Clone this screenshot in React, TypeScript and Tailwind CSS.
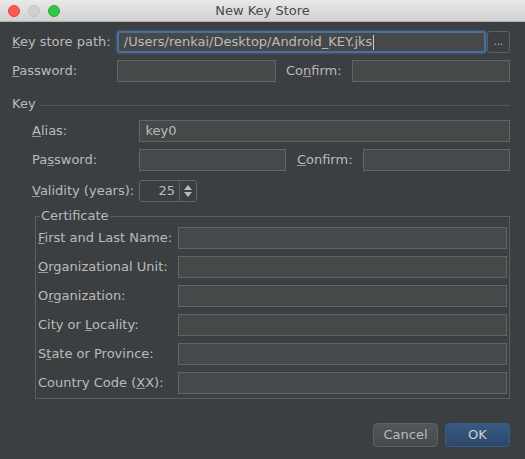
const font = { fontFamily: '"DejaVu Sans", "Noto Sans", sans-serif' };

function U({ children }: { children: string }) {
  return <span className="underline underline-offset-[1px] decoration-[#999]">{children}</span>;
}

function Field({ w, value, focused }: { w: string; value?: string; focused?: boolean }) {
  if (focused) {
    return (
      <div className={`${w} h-[22px] rounded-[3px] border-2 border-[#4d6f95] shadow-[0_0_2px_1px_#3d5a7c] bg-[#45494a] flex items-center px-[5px] text-[13px] text-[#bbbbbb]`}>
        <span>{value}</span>
        <span className="w-px h-[15px] bg-[#cccccc] ml-px" />
      </div>
    );
  }
  return (
    <div className={`${w} h-[22px] border border-[#646464] bg-[#45494a] flex items-center px-[6px] text-[13px] text-[#bbbbbb]`}>
      {value}
    </div>
  );
}

const certRows: [string, string, string][] = [
  ["", "F", "irst and Last Name:"],
  ["", "O", "rganizational Unit:"],
  ["O", "r", "ganization:"],
  ["City or ", "L", "ocality:"],
  ["S", "t", "ate or Province:"],
  ["Country Code (", "X", "X):"],
];

export default function App() {
  return (
    <div className="w-[525px] h-[459px] bg-[#3c3f41] flex flex-col overflow-hidden" style={font}>
      <div className="h-[22px] shrink-0 bg-gradient-to-b from-[#e9e9e9] to-[#d1d1d1] border-b border-[#b4b4b4] flex items-center relative">
        <div className="flex gap-[8px] pl-[8px]">
          <div className="w-[12px] h-[12px] rounded-full bg-[#fc5753] border border-[#df4744]" />
          <div className="w-[12px] h-[12px] rounded-full bg-[#d0d0d0] border border-[#c4c4c4]" />
          <div className="w-[12px] h-[12px] rounded-full bg-[#33c748] border border-[#27aa35]" />
        </div>
        <div className="absolute inset-0 flex items-center justify-center text-[13px] text-[#4a4a4a]">New Key Store</div>
      </div>

      <div className="flex flex-col pl-[12px] pr-[15px] pt-[9px] text-[13px] text-[#bbbbbb]">
        <div className="flex items-center h-[22px]">
          <div className="w-[105px]"><U>K</U>ey store path:</div>
          <Field w="w-[370px]" value="/Users/renkai/Desktop/Android_KEY.jks" focused />
          <div className="ml-[1px] w-[23px] h-[22px] rounded-[3px] border border-[#5e6060] flex items-center justify-center text-[10px] text-[#bbbbbb] pb-[2px]">...</div>
        </div>

        <div className="flex items-center h-[22px] mt-[7px]">
          <div className="w-[105px]"><U>P</U>assword:</div>
          <Field w="w-[159px]" />
          <div className="w-[76px] pl-[10px]">Co<U>n</U>firm:</div>
          <Field w="w-[158px]" />
        </div>

        <div className="flex items-center h-[14px] mt-[15px]">
          <div>Key</div>
          <div className="flex-1 h-px bg-[#555759] ml-[5px] mt-[3px]" />
        </div>

        <div className="flex flex-col pl-[20px] pr-0 mt-[9px]">
          <div className="flex items-center h-[22px]">
            <div className="w-[107px]"><U>A</U>lias:</div>
            <Field w="w-[373px]" value="key0" />
          </div>
          <div className="flex items-center h-[22px] mt-[7px]">
            <div className="w-[107px]">Pa<U>s</U>sword:</div>
            <Field w="w-[148px]" />
            <div className="w-[77px] pl-[11px]"><U>C</U>onfirm:</div>
            <Field w="w-[148px]" />
          </div>
          <div className="flex items-center h-[22px] mt-[9px]">
            <div className="w-[107px]"><U>V</U>alidity (years):</div>
            <div className="w-[58px] h-[22px] border border-[#646464] rounded-[3px] flex items-center">
              <div className="flex-1 text-right pr-[4px]">25</div>
              <div className="w-px h-[20px] bg-[#5a5d5f]" />
              <div className="w-[16px] flex flex-col items-center gap-[2px]">
                <svg width="8" height="5" viewBox="0 0 8 5"><path d="M4 0 L8 5 L0 5 Z" fill="#bbbbbb" /></svg>
                <svg width="8" height="5" viewBox="0 0 8 5"><path d="M0 0 L8 0 L4 5 Z" fill="#bbbbbb" /></svg>
              </div>
            </div>
          </div>

          <div className="relative mt-[14px] ml-[3px] w-[475px] h-[183px] border border-[#5b5d5f] flex flex-col pl-[2px] pr-[2px] pt-[10px]">
            <div className="absolute -top-[9px] left-[4px] bg-[#3c3f41] px-[1px] leading-[16px]">Certificate</div>
            {certRows.map(([a, u, b], i) => (
              <div key={i} className={`flex items-center h-[22px] ${i > 0 ? "mt-[7px]" : ""}`}>
                <div className="w-[140px]">{a}<U>{u}</U>{b}</div>
                <Field w="w-[329px]" />
              </div>
            ))}
          </div>
        </div>

        <div className="flex justify-end gap-[7px] mt-[24px]">
          <div className="w-[65px] h-[24px] rounded-[4px] border border-[#5e6060] bg-gradient-to-b from-[#525658] to-[#474a4c] flex items-center justify-center text-[13px] text-[#bbbbbb]">Cancel</div>
          <div className="w-[65px] h-[24px] rounded-[4px] border border-[#3d5a80] bg-gradient-to-b from-[#385a84] to-[#2b466a] flex items-center justify-center text-[13px] text-[#d0d0d0]">OK</div>
        </div>
      </div>
    </div>
  );
}
